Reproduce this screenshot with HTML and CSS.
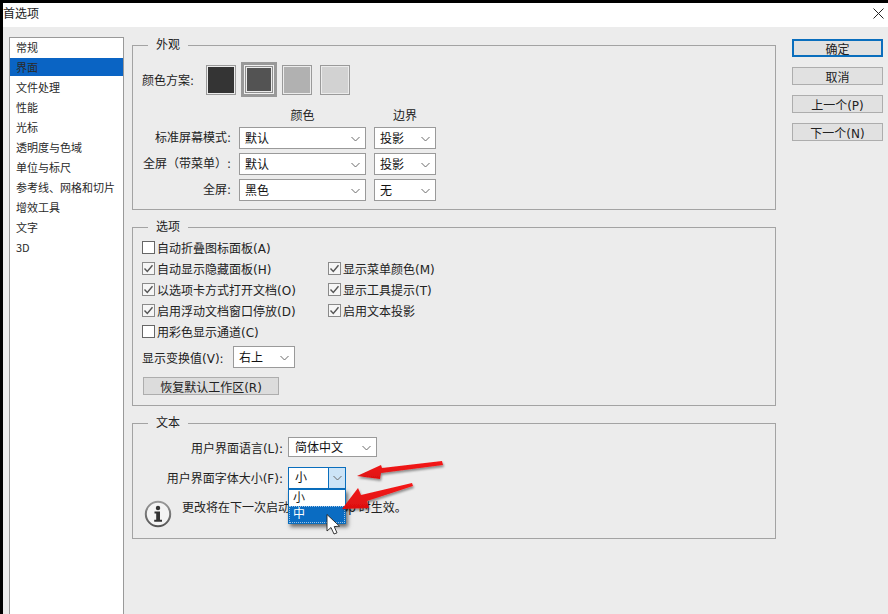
FILE: index.html
```html
<!DOCTYPE html>
<html lang="zh-CN">
<head>
<meta charset="utf-8">
<title>首选项</title>
<link rel="stylesheet" href="styles.css">
</head>
<body>
<svg class="defs" width="0" height="0" aria-hidden="true">
  <defs>
    <symbol id="chev" viewBox="0 0 9 6"><path d="M.5 1 4.5 5 8.5 1" fill="none" stroke="#6a6a6a" stroke-width="1"/></symbol>
    <symbol id="tick" viewBox="0 0 13 13"><path d="M2.5 6.5 5.3 9.5 10.5 3.2" fill="none" stroke="#555" stroke-width="1.4"/></symbol>
  </defs>
</svg>
<div class="screen">
  <div class="titlebar">
    <span>首选项</span>
    <svg class="close" width="11" height="11" viewBox="0 0 11 11"><path d="M.5.5 10.5 10.5M10.5.5.5 10.5" stroke="#222" stroke-width="1" fill="none"/></svg>
  </div>
  <div class="body">
    <ul class="nav">
      <li>常规</li>
      <li class="active">界面</li>
      <li>文件处理</li>
      <li>性能</li>
      <li>光标</li>
      <li>透明度与色域</li>
      <li>单位与标尺</li>
      <li>参考线、网格和切片</li>
      <li>增效工具</li>
      <li>文字</li>
      <li>3D</li>
    </ul>
    <div class="panels">
      <fieldset class="group group-look">
        <legend>外观</legend>
        <div class="scheme">
          <span class="scheme-label">颜色方案:</span>
          <span class="cell"><i class="swatch s1"></i></span>
          <span class="cell"><i class="swatch s2 selected"></i></span>
          <span class="cell"><i class="swatch s3"></i></span>
          <span class="cell"><i class="swatch s4"></i></span>
        </div>
        <div class="look-grid">
          <span></span><span class="head">颜色</span><span class="head">边界</span>
          <span class="lbl">标准屏幕模式:</span>
          <div class="select"><span>默认</span><svg class="chev"><use href="#chev"/></svg></div>
          <div class="select"><span>投影</span><svg class="chev"><use href="#chev"/></svg></div>
          <span class="lbl">全屏（带菜单）:</span>
          <div class="select"><span>默认</span><svg class="chev"><use href="#chev"/></svg></div>
          <div class="select"><span>投影</span><svg class="chev"><use href="#chev"/></svg></div>
          <span class="lbl">全屏:</span>
          <div class="select"><span>黑色</span><svg class="chev"><use href="#chev"/></svg></div>
          <div class="select"><span>无</span><svg class="chev"><use href="#chev"/></svg></div>
        </div>
      </fieldset>

      <fieldset class="group group-options">
        <legend>选项</legend>
        <div class="checks">
          <label class="check c1"><i class="box"></i>自动折叠图标面板(A)</label>
          <label class="check c1"><i class="box"><svg><use href="#tick"/></svg></i>自动显示隐藏面板(H)</label>
          <label class="check"><i class="box"><svg><use href="#tick"/></svg></i>显示菜单颜色(M)</label>
          <label class="check c1"><i class="box"><svg><use href="#tick"/></svg></i>以选项卡方式打开文档(O)</label>
          <label class="check"><i class="box"><svg><use href="#tick"/></svg></i>显示工具提示(T)</label>
          <label class="check c1"><i class="box"><svg><use href="#tick"/></svg></i>启用浮动文档窗口停放(D)</label>
          <label class="check"><i class="box"><svg><use href="#tick"/></svg></i>启用文本投影</label>
          <label class="check c1"><i class="box"></i>用彩色显示通道(C)</label>
        </div>
        <div class="transform">
          <span>显示变换值(V):</span>
          <div class="select sel-transform"><span>右上</span><svg class="chev"><use href="#chev"/></svg></div>
        </div>
        <button class="btn btn-reset" type="button">恢复默认工作区(R)</button>
      </fieldset>

      <fieldset class="group group-text">
        <legend>文本</legend>
        <div class="text-row">
          <span class="text-lbl">用户界面语言(L):</span>
          <div class="select sel-lang"><span>简体中文</span><svg class="chev"><use href="#chev"/></svg></div>
        </div>
        <div class="text-row row-size">
          <span class="text-lbl lbl-size">用户界面字体大小(F):</span>
          <div class="select sel-size">
            <span>小</span>
            <i class="sel-btn"><svg class="chev"><use href="#chev"/></svg></i>
            <ul class="drop">
              <li>小</li>
              <li class="hover">中</li>
            </ul>
          </div>
        </div>
        <div class="info">
          <svg class="info-icon" width="28" height="28" viewBox="0 0 28 28">
            <defs><linearGradient id="ring" x1="0" y1="0" x2="0" y2="1"><stop offset="0" stop-color="#9a9a9a"/><stop offset="1" stop-color="#555"/></linearGradient></defs>
            <circle cx="14" cy="14" r="12.2" fill="#f4f4f4" stroke="url(#ring)" stroke-width="2"/>
            <circle cx="14" cy="8" r="2.2" fill="#333"/>
            <path d="M10.5 11.5h5.5v8.3h2v1.9H10.2v-1.9h2v-6.4h-1.7z" fill="#333"/>
          </svg>
          <p>更改将在下一次启动 Photoshop 时生效。</p>
        </div>
      </fieldset>
    </div>
    <div class="actions">
      <button class="btn btn-primary" type="button">确定</button>
      <button class="btn" type="button">取消</button>
      <button class="btn" type="button">上一个(P)</button>
      <button class="btn" type="button">下一个(N)</button>
    </div>
  </div>
  <svg class="marks" width="888" height="614" viewBox="0 0 888 614" aria-hidden="true">
    <defs>
      <linearGradient id="red" x1="0" y1="0" x2="0" y2="1"><stop offset="0" stop-color="#f61a1a"/><stop offset="1" stop-color="#dc1010"/></linearGradient>
      <filter id="soft" x="-20%" y="-40%" width="140%" height="180%"><feDropShadow dx="1" dy="2" stdDeviation="1.2" flood-color="#000" flood-opacity=".4"/></filter>
    </defs>
    <polygon class="arrow" points="442,461 443,465 381,473 380,479 357,476 381,465 382,468"/>
    <polygon class="arrow" points="412,483 413,486 367,501 369,508 342,509 358,488 361,495"/>
    <path class="cursor" d="M327 514.5V531L331 527.5 334 534 337 532.8 334.2 526.6 339.5 526.2Z"/>
  </svg>
</div>
</body>
</html>
```
FILE: styles.css
```css
* { box-sizing: border-box; }
html, body { margin: 0; padding: 0; background: #000; }
body {
  font-family: "DejaVu Sans", "Noto Sans CJK SC", sans-serif;
  font-size: 12px;
  color: #1c1c1c;
  overflow: hidden;
}
.defs { position: absolute; }
.screen {
  position: relative;
  width: 888px;
  height: 614px;
  padding: 3px 0 0 3px;
  background: #000;
  display: flex;
  flex-direction: column;
  overflow: hidden;
}
.titlebar {
  height: 24px;
  flex: none;
  background: #fff;
  display: flex;
  align-items: center;
  justify-content: space-between;
  padding: 0 4px 1px 0;
  line-height: 21px;
  color: #222;
}
.close { margin-top: -2px; }
.body {
  flex: 1;
  min-height: 0;
  background: #ececec;
  display: flex;
  align-items: stretch;
  padding: 10px 0 0 6px;
}
.nav {
  width: 115px;
  flex: none;
  margin: 0;
  padding: 0;
  list-style: none;
  background: #fff;
  border: 1px solid #999;
  border-bottom: 0;
  font-family: "Noto Sans CJK SC", sans-serif;
  font-size: 11px;
  color: #2a2a2a;
}
.nav li {
  height: 18px;
  margin-bottom: 2px;
  line-height: 18px;
  padding-left: 6px;
}
.nav .active { background: #0a64c4; }
.panels {
  width: 644px;
  flex: none;
  margin-left: 8px;
  display: flex;
  flex-direction: column;
  gap: 9px;
}
.group {
  margin: 0;
  min-width: 0;
  border: 1px solid #a3a3a3;
  padding: 0 9px;
}
.group legend {
  margin-left: 6px;
  padding: 0 8px;
  height: 16px;
  line-height: 16px;
  color: #222;
}
.group-look { padding-top: 9px; padding-bottom: 8px; }
.scheme {
  display: flex;
  align-items: center;
  gap: 2px;
  height: 35px;
}
.scheme-label { width: 59px; white-space: nowrap; }
.cell {
  width: 36px;
  height: 35px;
  display: flex;
  align-items: center;
  justify-content: center;
}
.swatch {
  display: block;
  width: 30px;
  height: 30px;
  border: 1px solid #9a9a9a;
  box-shadow: inset 0 0 0 1px #ececec;
}
.s1 { background: #343434; }
.s2 { background: #535353; }
.s3 { background: #b1b1b1; }
.s4 { background: #d2d2d2; }
.swatch.selected {
  width: 36px;
  height: 35px;
  border: 3px solid #999;
  box-shadow: inset 0 0 0 1px #f0f0f0, inset 0 0 0 2px #8e8e8e, inset 0 0 0 3px #ececec;
}
.look-grid {
  margin-top: 9px;
  display: grid;
  grid-template-columns: 89px 127px 62px;
  grid-auto-rows: 22px;
  grid-template-rows: 17px;
  gap: 4px 8px;
}
.head { text-align: center; line-height: 20px; color: #222; }
.lbl { text-align: right; line-height: 22px; white-space: nowrap; color: #222; }
.select {
  position: relative;
  display: flex;
  align-items: center;
  justify-content: space-between;
  background: #fff;
  border: 1px solid #9a9a9a;
  padding: 1px 5px 0 5px;
  line-height: 20px;
  color: #111;
}
.chev { width: 9px; height: 6px; display: block; }
.checks {
  margin-top: 2px;
  display: grid;
  grid-template-columns: 186px 1fr;
  grid-auto-rows: 21px;
}
.check {
  display: flex;
  align-items: center;
  gap: 2px;
  color: #222;
  white-space: nowrap;
}
.c1 { grid-column: 1; }
.box {
  width: 13px;
  height: 13px;
  flex: none;
  background: #fff;
  border: 1px solid #666;
  display: block;
  position: relative;
}
.box:has(svg) { border-color: #8a8a8a; background: #f6f6f6; }
.box svg { position: absolute; inset: -1px; width: 13px; height: 13px; }
.transform {
  margin-top: 4px;
  display: flex;
  align-items: center;
  gap: 4px;
  height: 22px;
}
.transform > span { width: 87px; white-space: nowrap; color: #222; }
.sel-transform { width: 62px; height: 22px; }
.btn {
  display: block;
  font: inherit;
  height: 18px;
  line-height: 16px;
  padding: 2px 0 0;
  background: #e1e1e1;
  border: 1px solid #adadad;
  color: #222;
  text-align: center;
}
.btn-reset { width: 136px; margin: 9px 0 10px 1px; background: #dcdcdc; }
.group-text { padding-top: 6px; padding-bottom: 10px; }
.text-row {
  display: flex;
  align-items: center;
  gap: 5px;
  height: 20px;
}
.row-size { height: 22px; margin-top: 10px; }
.text-lbl { width: 141px; text-align: right; white-space: nowrap; color: #222; }
.lbl-size { padding-bottom: 2px; }
.sel-lang { width: 89px; height: 20px; padding-left: 6px; }
.sel-size {
  width: 58px;
  height: 22px;
  border-color: #0a6ebd;
  padding: 0 0 0 6px;
}
.sel-btn {
  width: 17px;
  height: 20px;
  background: #cce4f7;
  border-left: 1px solid #0a6ebd;
  display: flex;
  align-items: center;
  justify-content: center;
}
.drop {
  position: absolute;
  left: -1px;
  top: 21px;
  width: 58px;
  margin: 0;
  padding: 0;
  list-style: none;
  background: #fff;
  border: 1px solid #0a6ebd;
  box-shadow: 2px 3px 4px rgba(0, 0, 0, .55);
  z-index: 2;
}
.drop li { height: 16px; line-height: 17px; padding-left: 4px; color: #222; }
.drop .hover {
  height: 17px;
  background: #0a6cc2;
  color: #fff;
  outline: 1px dotted #9cc4e8;
  outline-offset: -1px;
}
.info {
  margin-top: 11px;
  display: flex;
  align-items: flex-start;
  gap: 10px;
  height: 28px;
  padding-left: 2px;
}
.info p { margin: 0; line-height: 16px; color: #222; white-space: nowrap; word-spacing: -1px; }
.info-icon { display: block; flex: none; }
.actions {
  width: 91px;
  flex: none;
  margin-left: 16px;
  display: flex;
  flex-direction: column;
  gap: 10px;
  padding-top: 2px;
}
.btn-primary { border: 2px solid #0a6ebd; line-height: 14px; padding-top: 2px; }
.marks { position: absolute; left: 0; top: 0; pointer-events: none; z-index: 3; }
.arrow { fill: url(#red); filter: url(#soft); }
.cursor { fill: #fff; stroke: #222; stroke-width: .9; }
```
